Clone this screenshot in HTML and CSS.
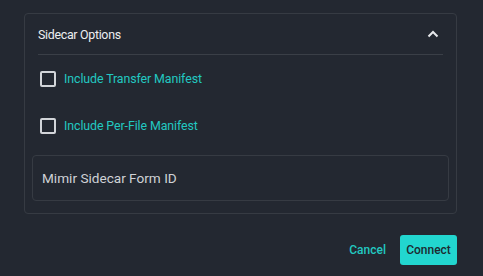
FILE: index.html
```html
<!DOCTYPE html>
<html lang="en">
<head>
    <meta charset="UTF-8">
    <title>Sidecar Options</title>
    <link rel="stylesheet" href="styles.css">
</head>
<body>
    <div class="dialog">
        <div class="panel">
            <div class="panel-header">
                <span class="panel-title">Sidecar Options</span>
                <svg class="chevron" width="12" height="8" viewBox="0 0 12 8">
                    <path d="M1.5 6.5 L6 2 L10.5 6.5" fill="none" stroke="#e6e8eb" stroke-width="2"/>
                </svg>
            </div>
            <div class="panel-body">
                <label class="check-row">
                    <span class="check-box"></span>
                    <span class="check-label">Include Transfer Manifest</span>
                </label>
                <label class="check-row">
                    <span class="check-box"></span>
                    <span class="check-label">Include Per-File Manifest</span>
                </label>
                <div class="text-field">Mimir Sidecar Form ID</div>
            </div>
        </div>

        <div class="actions">
            <button class="btn-text">Cancel</button>
            <button class="btn-primary">Connect</button>
        </div>
    </div>
</body>
</html>
```

FILE: styles.css
```css
body {
    margin: 0;
    background-color: #232831;
    font-family: Roboto, "Liberation Sans", sans-serif;
    color: #e6e8eb;
}
.dialog {
    padding: 13px 26px 0 24px;
}
.panel {
    border: 1px solid #363b43;
    border-radius: 4px;
    height: 199px;
}
.panel-header {
    display: flex;
    align-items: center;
    justify-content: space-between;
    margin: 0 13px;
    height: 40px;
    border-bottom: 1px solid #3a3f47;
}
.panel-title {
    font-size: 12.4px;
    letter-spacing: -0.3px;
    color: #eceef0;
}
.chevron {
    margin-right: 4px;
}
.panel-body {
    padding: 0 7px;
}

/* checkbox rows */
.check-row {
    display: flex;
    align-items: center;
    height: 47px;
    padding-left: 8px;
}
.check-box {
    width: 12px;
    height: 12px;
    border: 2px solid #d2d5d9;
    border-radius: 2px;
    margin-right: 8px;
}
.check-label {
    font-size: 12.4px;
    letter-spacing: -0.1px;
    color: #22c8c1;
}

.text-field {
    margin-top: 6px;
    height: 44px;
    border: 1px solid #363b43;
    border-radius: 4px;
    display: flex;
    align-items: center;
    padding-left: 9px;
    font-size: 13.6px;
    color: #cfd2d6;
}

.actions {
    display: flex;
    justify-content: flex-end;
    align-items: center;
    margin-top: 21px;
}
.btn-text {
    background: none;
    border: none;
    font-family: inherit;
    font-size: 12px;
    font-weight: 500;
    color: #22c8c1;
    padding: 0;
    margin-right: 14px;
    cursor: pointer;
}
.btn-primary {
    background-color: #22d6cf;
    color: #1d2a30;
    border: none;
    border-radius: 3px;
    font-family: inherit;
    font-size: 12px;
    font-weight: 500;
    width: 57px;
    height: 30px;
    padding: 0;
    cursor: pointer;
}
```
